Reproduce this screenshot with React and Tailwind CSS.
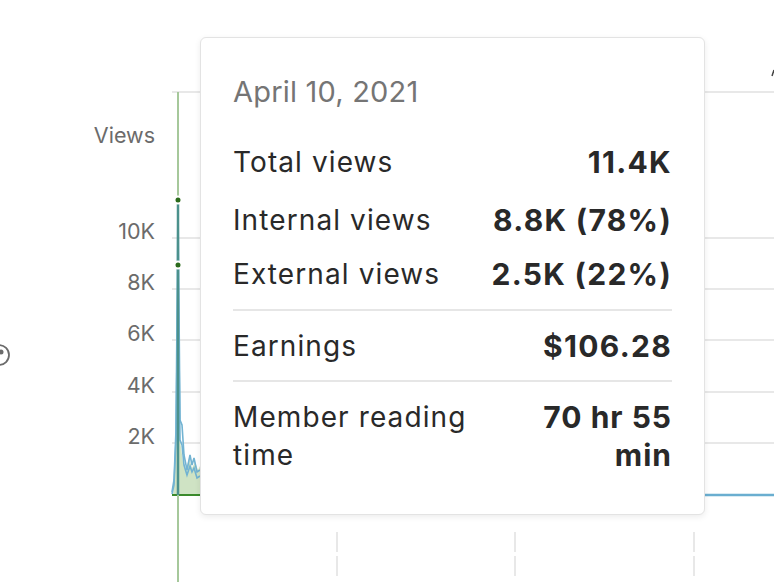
import React from 'react'

const gridYs = [238, 289, 340, 392, 443]
const ticks = [
    { label: '10K', y: 238 },
    { label: '8K', y: 289 },
    { label: '6K', y: 340 },
    { label: '4K', y: 392 },
    { label: '2K', y: 443 },
]

function Chart() {
    return (
        <svg width="774" height="582" viewBox="0 0 774 582" className="absolute inset-0">
            {/* grid */}
            <line x1="172" y1="92" x2="774" y2="92" stroke="#e8e8e8" strokeWidth="2" />
            {gridYs.map((y) => (
                <line key={y} x1="172" y1={y} x2="774" y2={y} stroke="#e8e8e8" strokeWidth="2" />
            ))}

            {/* axis labels */}
            <text x="155" y="143" textAnchor="end" fontFamily="Inter, 'Noto Sans', sans-serif" fontSize="21.5" fill="#6b6b6b">
                Views
            </text>
            {ticks.map((t) => (
                <text key={t.label} x="155" y={t.y + 1} textAnchor="end" fontFamily="Inter, 'Noto Sans', sans-serif" fontSize="21.5" fill="#6b6b6b">
                    {t.label}
                </text>
            ))}

            {/* external views area */}
            <path
                d="M173 495 L175 470 L178 265 L180 440 L183 462 L186 470 L189 458 L192 468 L195 462 L198 470 L200 466 L200 495 Z"
                fill="#cfe3c4"
            />
            {/* total + internal lines */}
            <path
                d="M172 492 L174 480 L176 430 L178 200 L180 420 L182 425 L184 455 L187 470 L190 455 L192 465 L194 458 L197 472 L200 470"
                fill="none"
                stroke="#72b3d2"
                strokeWidth="1.6"
            />
            <path
                d="M172 494 L174 485 L176 440 L178 265 L180 440 L182 445 L184 465 L187 475 L190 466 L192 472 L194 468 L197 478 L200 476"
                fill="none"
                stroke="#72b3d2"
                strokeWidth="1.6"
            />

            {/* baseline */}
            <line x1="172" y1="495" x2="200" y2="495" stroke="#3b8a2c" strokeWidth="2" />
            <line x1="200" y1="495" x2="774" y2="495" stroke="#6aaed0" strokeWidth="2.5" />

            {/* hover line */}
            <line x1="178" y1="92" x2="178" y2="582" stroke="#a6c89b" strokeWidth="2" />
            <line x1="178" y1="200" x2="178" y2="495" stroke="#4b918c" strokeWidth="2.5" />
            <circle cx="178" cy="200" r="3.5" fill="#2b6b1c" stroke="#fff" strokeWidth="2" />
            <circle cx="178" cy="265" r="3.5" fill="#2b6b1c" stroke="#fff" strokeWidth="2" />

            {/* x ticks */}
            {[337, 515, 694].map((x) => (
                <g key={x} stroke="#e8e8e8" strokeWidth="2">
                    <line x1={x} y1="532" x2={x} y2="552" />
                    <line x1={x} y1="556" x2={x} y2="576" />
                </g>
            ))}

            {/* clipped help icon on left edge */}
            <circle cx="-1" cy="355" r="10" fill="none" stroke="#6b6b6b" strokeWidth="1.8" />
            <circle cx="1" cy="352" r="2.5" fill="#6b6b6b" />

            {/* clipped glyph at top right */}
            <line x1="772" y1="76" x2="774" y2="70" stroke="#444" strokeWidth="1.5" />
        </svg>
    )
}

function Row({ label, value, className = '' }) {
    return (
        <div className={`flex justify-between items-center h-[38px] ${className}`}>
            <span className="text-[28px] tracking-[1.1px] text-[#292929]">{label}</span>
            <span className="text-[30px] font-bold tracking-[1.3px] text-[#292929] text-right">{value}</span>
        </div>
    )
}

export default function App() {
    return (
        <div className="relative w-[774px] h-[582px] overflow-hidden bg-white" style={{ fontFamily: 'Inter, "Noto Sans", sans-serif' }}>
            <Chart />

            {/* tooltip */}
            <div className="absolute left-[200px] top-[37px] w-[505px] h-[478px] bg-white rounded-md border border-[#e3e3e3] shadow-[0_2px_6px_rgba(0,0,0,0.08)] pl-[32px] pr-[32px] pt-[35px]">
                <div className="text-[29px] leading-[38px] text-[#757575] tracking-[0.2px]">April 10, 2021</div>
                <Row label="Total views" value="11.4K" className="mt-[32px]" />
                <Row label="Internal views" value="8.8K (78%)" className="mt-[20px]" />
                <Row label="External views" value="2.5K (22%)" className="mt-[16px]" />
                <div className="mt-[16px] h-[2px] bg-[#e6e6e6]" />
                <Row label="Earnings" value="$106.28" className="mt-[16px]" />
                <div className="mt-[15px] h-[2px] bg-[#e6e6e6]" />
                <div className="mt-[16px] flex justify-between items-start leading-[38px] text-[#292929]">
                    <span className="text-[28px] tracking-[1.1px]">
                        Member reading
                        <br />
                        time
                    </span>
                    <span className="text-[30px] font-bold tracking-[1px] text-right">
                        70 hr 55
                        <br />
                        min
                    </span>
                </div>
            </div>
        </div>
    )
}
